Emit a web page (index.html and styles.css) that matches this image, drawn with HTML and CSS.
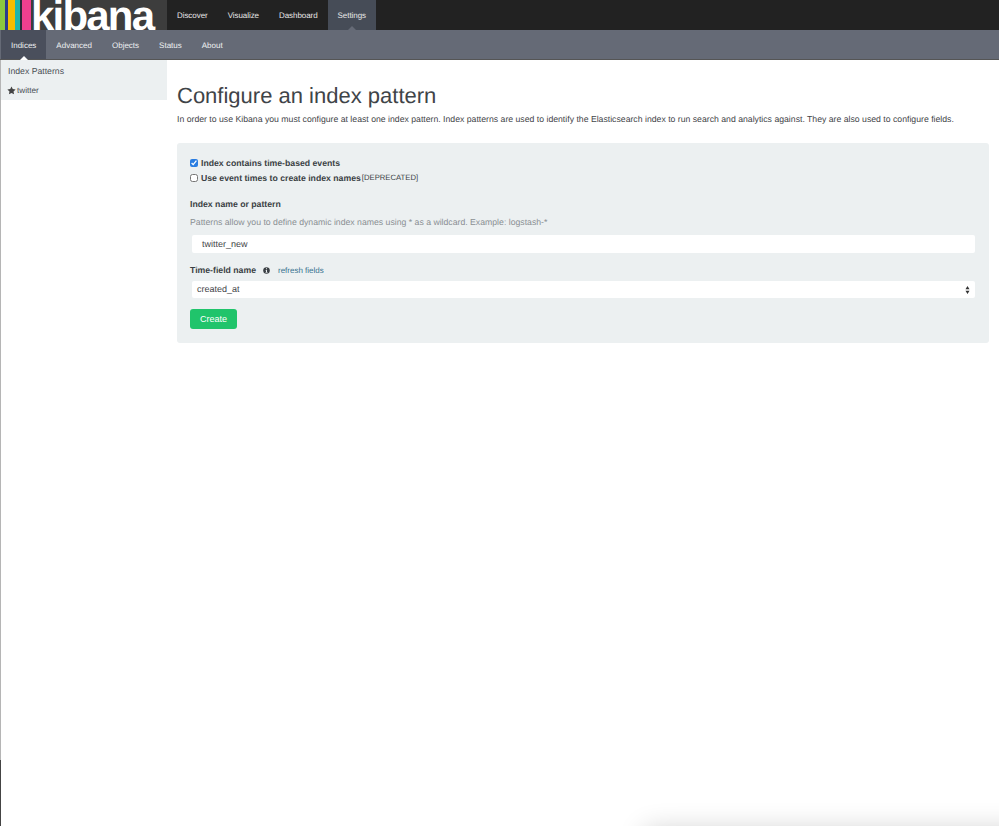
FILE: index.html
```html
<!DOCTYPE html>
<html lang="en">
<head>
<meta charset="utf-8">
<title>Kibana</title>
<link rel="stylesheet" href="styles.css">
</head>
<body>
<div class="edge"></div>
<header class="topbar">
  <div class="brand">
    <div class="stripes"><i class="s1"></i><i class="s2"></i><i class="s3"></i><i class="s4"></i><i class="s6"></i><i class="s5"></i></div>
    <span class="wordmark">kibana</span>
  </div>
  <nav class="topnav">
    <a>Discover</a><a>Visualize</a><a>Dashboard</a><a class="active">Settings</a>
  </nav>
</header>
<nav class="subnav">
  <a class="active">Indices</a><a>Advanced</a><a>Objects</a><a>Status</a><a>About</a>
</nav>
<div class="layout">
  <aside class="sidebar">
    <div class="side-title">Index Patterns</div>
    <div class="side-item">
      <svg class="star" viewBox="0 0 24 24"><path d="M12 1l3.400 7.200 7.600 1-5.600 5.300 1.500 7.700L12 18.400l-6.900 3.800 1.500-7.700L1 9.200l7.600-1z"/></svg>
      <span>twitter</span>
    </div>
  </aside>
  <main class="content">
    <h1>Configure an index pattern</h1>
    <p class="intro">In order to use Kibana you must configure at least one index pattern. Index patterns are used to identify the Elasticsearch index to run search and analytics against. They are also used to configure fields.</p>
    <form class="panel">
      <label class="check"><input type="checkbox" checked><b>Index contains time-based events</b></label>
      <label class="check second"><input type="checkbox"><b>Use event times to create index names</b><small>[DEPRECATED]</small></label>
      <div class="label first">Index name or pattern</div>
      <div class="help">Patterns allow you to define dynamic index names using * as a wildcard. Example: logstash-*</div>
      <div class="field textfield">twitter_new</div>
      <div class="label timefield">
        <span>Time-field name</span>
        <svg class="info" viewBox="0 0 16 16"><circle cx="8" cy="8" r="7.500"/><rect x="6.800" y="2.800" width="2.400" height="2.400" fill="#ecf0f1"/><path d="M5.800 6.600h3.400v5h1.100V13.200H5.800v-1.600h1V8.200h-1z" fill="#ecf0f1"/></svg>
        <a class="refresh">refresh fields</a>
      </div>
      <div class="field selectfield">
        <span>created_at</span>
        <svg class="updown" viewBox="0 0 6 10"><path d="M3 0l2.500 4h-5zM3 10l2.500-4h-5z"/></svg>
      </div>
      <button type="button" class="create">Create</button>
    </form>
  </main>
</div>
<div class="corner-shadow"></div>
</body>
</html>
```
FILE: styles.css
```css
* { box-sizing: border-box; }
html, body { margin: 0; height: 826px; overflow: hidden; background: #fff; }
body { font-family: "Liberation Sans", Arial, sans-serif; font-size: 9px; color: #3a3f44; position: relative; text-rendering: geometricPrecision; }
a { cursor: pointer; }

.edge { position: absolute; left: 0; top: 60px; width: 1px; height: 766px; background: linear-gradient(#b5b5b5 0, #b5b5b5 700px, #444 700px, #444 100%); }

.topbar { display: flex; height: 30px; background: #222; }
.brand { width: 167px; height: 30px; background: #3d3d3d; position: relative; overflow: hidden; }
.stripes { display: flex; width: 31px; height: 30px; }
.stripes i { display: block; height: 100%; }
.s1 { width: 5px; background: #8cc63f; }
.s2 { width: 3px; background: #2b3a8c; }
.s3 { width: 7px; background: #f5bd00; }
.s4 { width: 5px; background: #1db5ac; }
.s6 { width: 2px; background: #2a2a3a; }
.s5 { width: 9px; background: #ee3f8f; }
.wordmark { position: absolute; left: 31px; top: 0; font-size: 42px; line-height: 31px; font-weight: 700; color: #fff; letter-spacing: -1.8px; }

.topnav { display: flex; }
.topnav a { display: block; height: 30px; line-height: 31px; padding: 0 10px; font-size: 8px; letter-spacing: -0.06px; color: #e8e8e8; }
.topnav a.active { background: #464c57; position: relative; }
.topnav a.active::after { content: ""; position: absolute; left: 50%; bottom: 0; margin-left: -4px; border: 4px solid transparent; border-top: 0; border-bottom-color: #656a76; }

.subnav { display: flex; height: 30px; padding-left: 1px; background: #656a76; border-bottom: 1px solid #555; }
.subnav a { display: block; height: 29px; line-height: 31px; padding: 0 10px; font-size: 8px; color: #eef0f2; }
.subnav a.active { background: #4a4f5c; position: relative; }
.subnav a.active::after { content: ""; position: absolute; left: 50%; bottom: -1px; margin-left: -4px; border: 4px solid transparent; border-top: 0; border-bottom-color: #fff; }

.layout { display: flex; align-items: flex-start; }
.sidebar { width: 166px; height: 40px; margin-left: 1px; padding: 0 0 0 7px; background: #ecf0f1; color: #4a4f55; flex: none; }
.side-title { height: 21px; line-height: 22px; font-size: 8.700px; }
.side-item { display: flex; align-items: center; gap: 1px; height: 19px; line-height: 19px; font-size: 8.200px; }
.star { width: 9px; height: 9px; margin-left: -1px; fill: #444; }

.content { flex: 1; padding: 21px 10px 0 10px; }
h1 { margin: 0; font-size: 22px; line-height: 30px; font-weight: 400; color: #3f4448; }
.intro { margin: 2px 0 0; font-size: 8.700px; line-height: 13px; color: #3f4448; white-space: nowrap; }

.panel { margin-top: 17px; height: 200px; width: 812px; padding: 13px 14px 0 13px; background: #ecf0f1; border-radius: 3px; }
.check { display: flex; align-items: center; height: 13px; font-size: 8.700px; color: #3a3f44; }
.check.second { margin-top: 2px; }
.check input { width: 8px; height: 8px; margin: 0 3px 0 0; accent-color: #2a7de1; flex: none; }
.check small { font-size: 7.700px; font-weight: 400; margin-left: 1px; }
.label { font-weight: 700; font-size: 8.700px; line-height: 13px; color: #3a3f44; }
.label.first { margin-top: 14px; }
.help { margin-top: 5px; font-size: 8.700px; line-height: 13px; color: #8a8f93; }
.field { background: #fff; height: 18px; line-height: 18px; border-radius: 2px; margin-left: 2px; font-size: 9px; color: #3f4448; width: 782.500px; }
.textfield { margin-top: 6px; padding-left: 10px; }
.timefield { margin-top: 11px; display: flex; align-items: center; }
.info { width: 7px; height: 7px; margin-left: 7.500px; fill: #3a3f44; }
.refresh { margin-left: 7.500px; font-weight: 400; font-size: 8px; color: #36708f; }
.selectfield { margin-top: 4px; height: 17px; line-height: 17px; padding: 0 5px 0 5px; display: flex; align-items: center; justify-content: space-between; }
.updown { width: 5px; height: 8px; fill: #333; }
.create { display: block; margin-top: 11px; width: 47px; height: 20px; padding: 0; border: 0; border-radius: 3px; background: #20c46b; color: #fff; font: 400 9px "Liberation Sans", sans-serif; }

.corner-shadow { position: absolute; left: 645px; right: -40px; top: 830px; height: 30px; box-shadow: 0 0 28px rgba(0,0,0,.2); }
```
